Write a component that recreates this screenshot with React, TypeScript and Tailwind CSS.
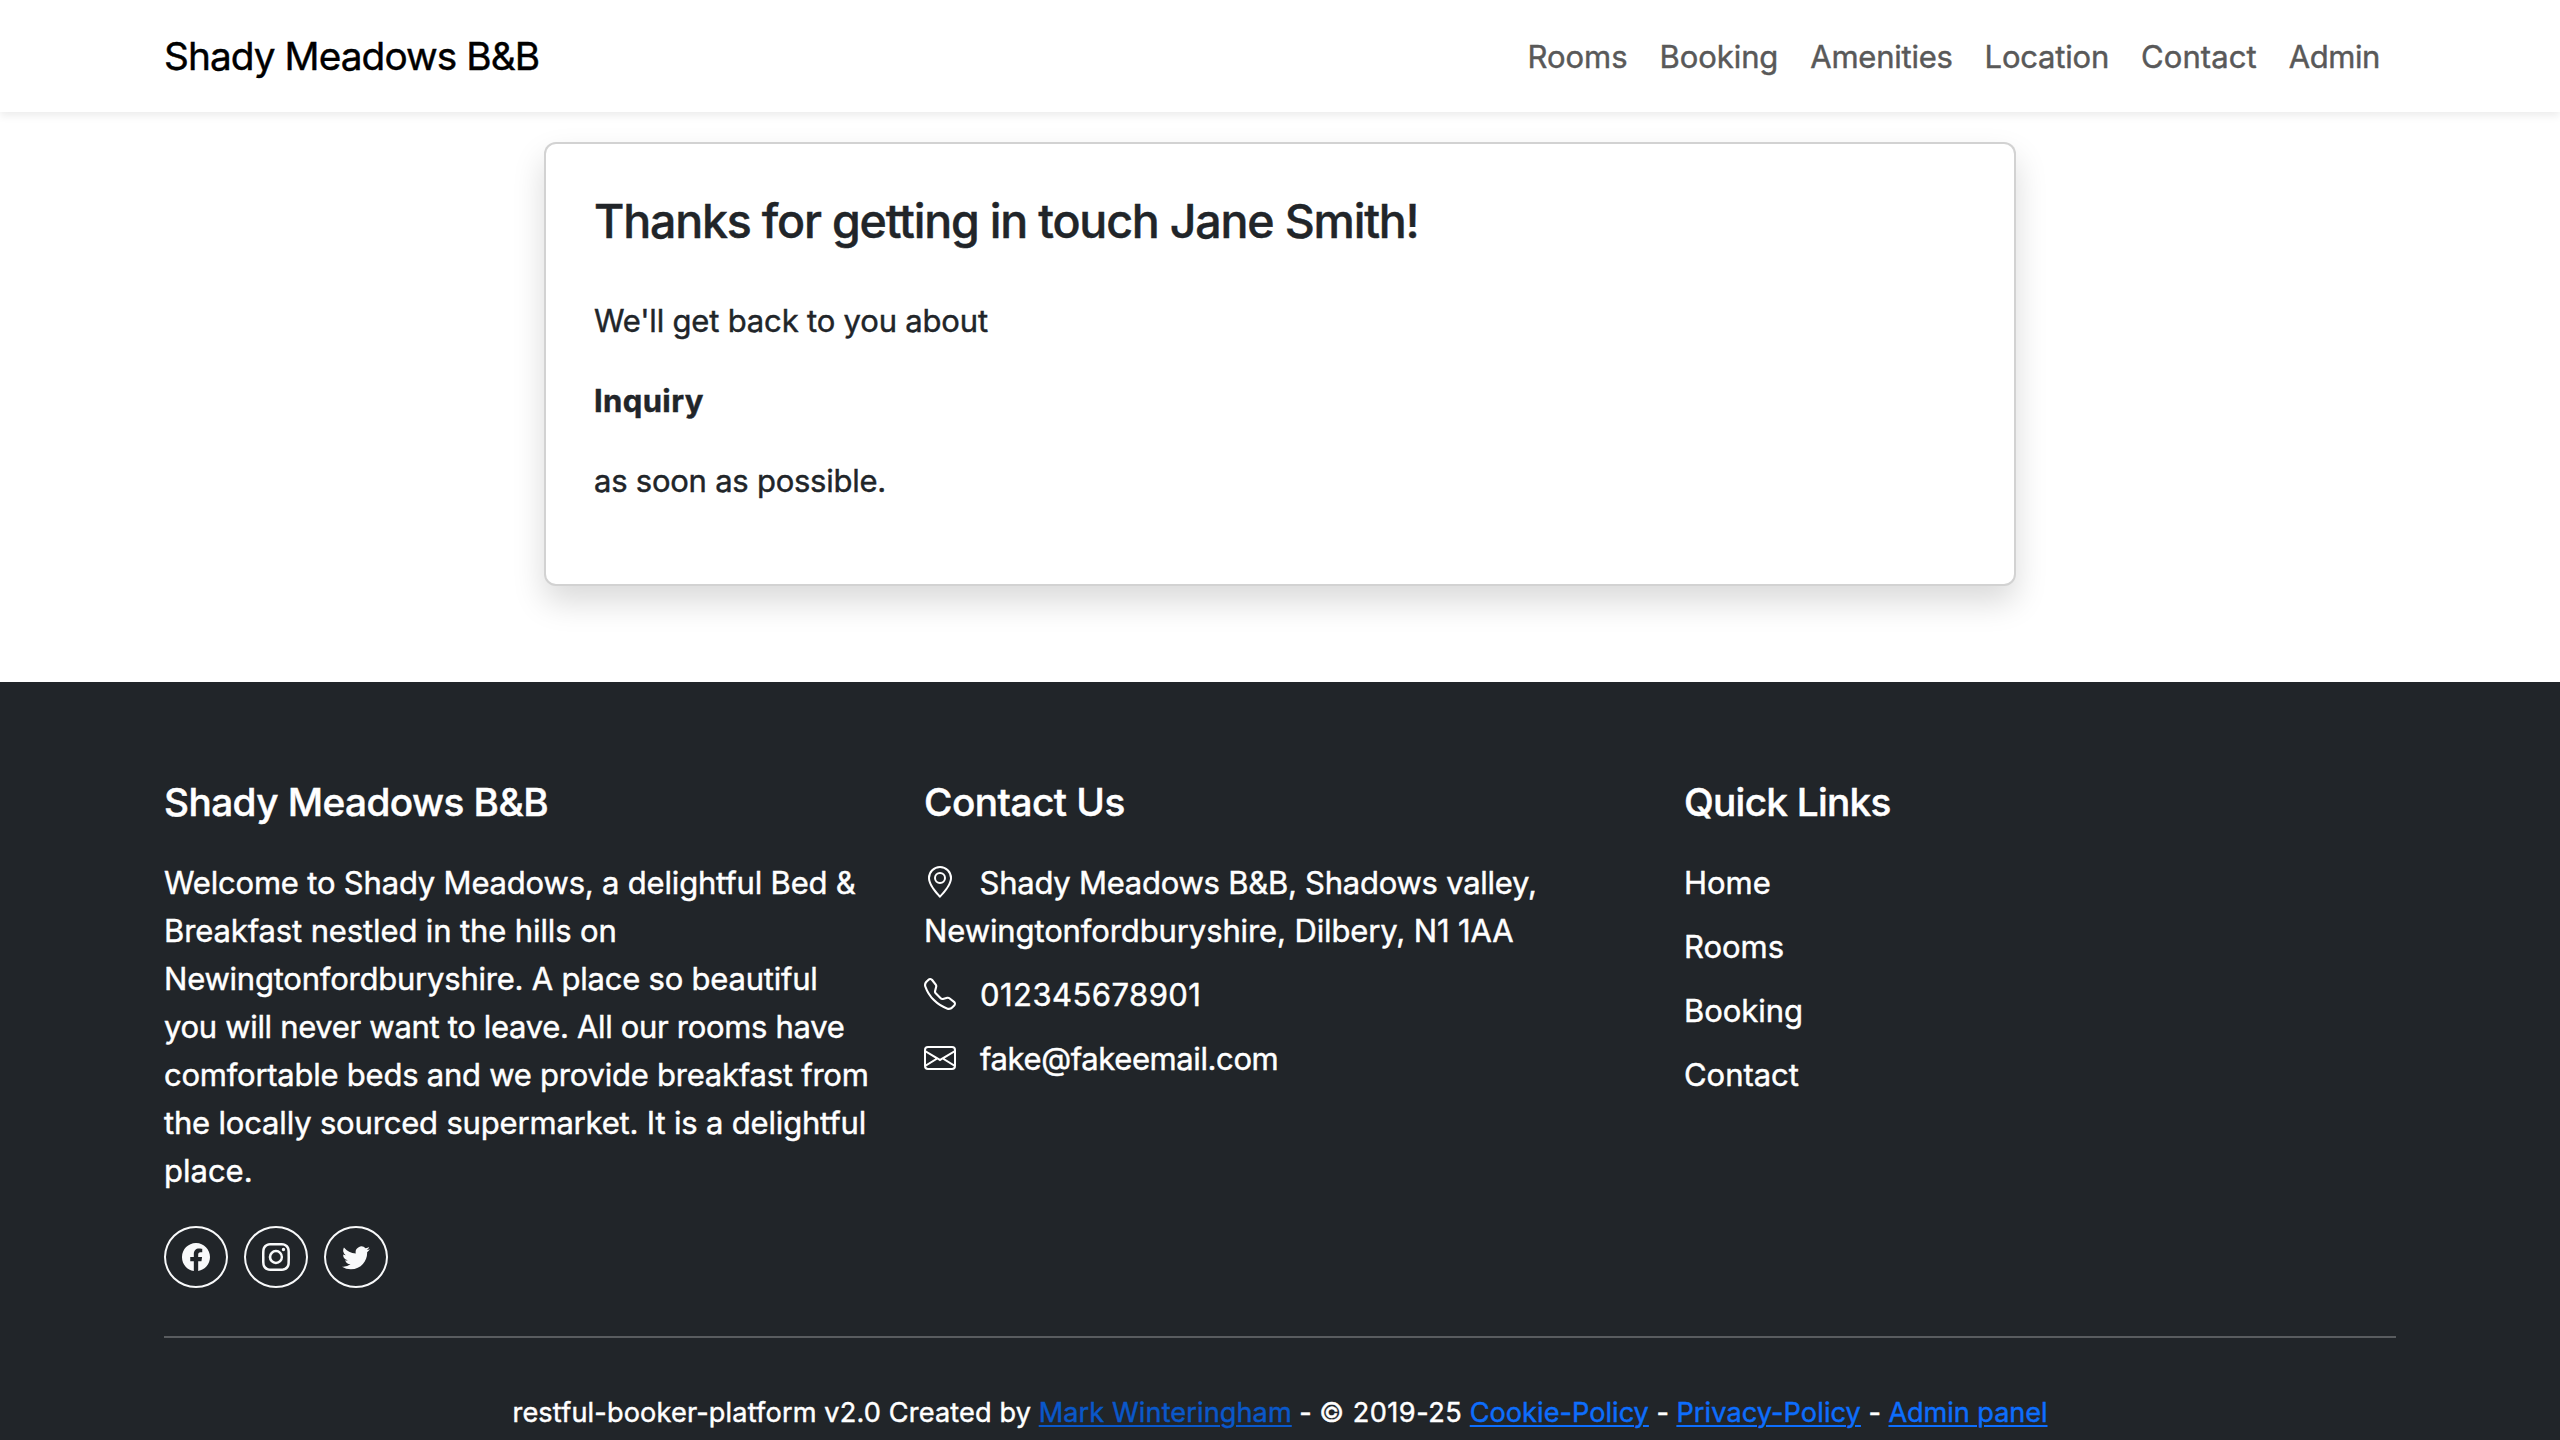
import {
  BsEnvelope,
  BsFacebook,
  BsGeoAlt,
  BsInstagram,
  BsTelephone,
  BsTwitter,
} from "react-icons/bs";

const navLinks = [
  { label: "Rooms", tracking: "tracking-normal" },
  { label: "Booking", tracking: "tracking-[-0.09px]" },
  { label: "Amenities", tracking: "tracking-[-0.25px]" },
  { label: "Location", tracking: "tracking-[-0.2px]" },
  { label: "Contact", tracking: "tracking-[0.08px]" },
  { label: "Admin", tracking: "tracking-[-0.42px]" },
];

const aboutLines = [
  { text: "Welcome to Shady Meadows, a delightful Bed &", tracking: "tracking-[-0.19px]" },
  { text: "Breakfast nestled in the hills on", tracking: "tracking-[-0.12px]" },
  { text: "Newingtonfordburyshire. A place so beautiful", tracking: "tracking-[-0.22px]" },
  { text: "you will never want to leave. All our rooms have", tracking: "tracking-[-0.32px]" },
  { text: "comfortable beds and we provide breakfast from", tracking: "tracking-[-0.24px]" },
  { text: "the locally sourced supermarket. It is a delightful", tracking: "tracking-[-0.18px]" },
  { text: "place.", tracking: "tracking-normal" },
];

const quickLinks = ["Home", "Rooms", "Booking", "Contact"];

const socials = [
  { name: "Facebook", Icon: BsFacebook },
  { name: "Instagram", Icon: BsInstagram },
  { name: "Twitter", Icon: BsTwitter },
];

function Navbar() {
  return (
    <nav className="relative flex h-28 items-center justify-between bg-white px-[164px] shadow-[0_4px_8px_rgba(0,0,0,0.075)]">
      <a className="text-[38.75px] leading-[60px] tracking-[-0.92px] text-black">Shady Meadows B&amp;B</a>
      <ul className="flex pt-0.5 text-[31px] leading-[48px] text-[#595959]">
        {navLinks.map((link) => (
          <li key={link.label} className={`px-4 ${link.tracking}`}>
            {link.label}
          </li>
        ))}
      </ul>
    </nav>
  );
}

function ThanksCard() {
  return (
    <section className="mx-auto mt-[30px] h-[444px] w-[1472px] rounded-xl border-2 border-black/[0.175] bg-white p-12 text-[31px] leading-[48px] shadow-[0_16px_32px_rgba(0,0,0,0.15)]">
      <h3 className="text-[46.5px] leading-[58px] font-medium tracking-[-1.19px]">
        Thanks for getting in touch Jane Smith!
      </h3>
      <p className="mt-[47px] tracking-[-0.18px]">We'll get back to you about</p>
      <p className="mt-8 font-bold tracking-[0.38px]">Inquiry</p>
      <p className="mt-8 tracking-[-0.24px]">as soon as possible.</p>
    </section>
  );
}

function Footer() {
  return (
    <footer className="mt-24 h-[758px] overflow-hidden bg-[#212529] px-[164px] pt-24 text-white">
      <div className="grid grid-cols-[760px_760px_1fr] text-[31px] leading-[48px]">
        <div>
          <h5 className="text-[38.75px] leading-[48px] font-medium tracking-[-0.58px]">Shady Meadows B&amp;B</h5>
          <p className="mt-[33px]">
            {aboutLines.map((line) => (
              <span key={line.text} className={`block whitespace-nowrap ${line.tracking}`}>
                {line.text}
              </span>
            ))}
          </p>
          <div className="mt-[31px] flex gap-4">
            {socials.map(({ name, Icon }) => (
              <a
                key={name}
                aria-label={name}
                className="flex h-[62px] w-16 items-center justify-center rounded-[50%] border-2 border-[#f8f9fa] text-[#f8f9fa]"
              >
                <Icon className="size-7" />
              </a>
            ))}
          </div>
        </div>
        <div>
          <h5 className="text-[38.75px] leading-[48px] font-medium tracking-[-0.52px]">Contact Us</h5>
          <ul className="mt-[33px] flex flex-col gap-4">
            <li>
              <div className="flex tracking-[-0.25px]">
                <BsGeoAlt className="mt-[7px] mr-[23.5px] size-8 [-webkit-text-stroke:0]" />
                Shady Meadows B&amp;B, Shadows valley,
              </div>
              <div className="tracking-[-0.11px]">Newingtonfordburyshire, Dilbery, N1 1AA</div>
            </li>
            <li className="flex tracking-[0.45px]">
              <BsTelephone className="mt-[7px] mr-6 size-8" />
              012345678901
            </li>
            <li className="flex tracking-[-0.4px]">
              <BsEnvelope className="mt-[7px] mr-6 size-8" />
              fake@fakeemail.com
            </li>
          </ul>
        </div>
        <div>
          <h5 className="text-[38.75px] leading-[48px] font-medium tracking-[-0.74px]">Quick Links</h5>
          <ul className="mt-[33px] flex flex-col gap-4 tracking-[-0.05px]">
            {quickLinks.map((label) => (
              <li key={label}>{label}</li>
            ))}
          </ul>
        </div>
      </div>
      <hr className="mt-12 border-t-2 border-[#595c5f]" />
      <div className="mt-[54px] flex justify-center gap-[7.5px] text-[27.125px] leading-[42px] whitespace-nowrap [text-decoration-skip-ink:auto]">
        <span className="tracking-[0.16px]">restful-booker-platform v2.0 Created by</span>
        <a className="tracking-[0.1px] text-[#0a58ca] underline decoration-2 underline-offset-3">Mark Winteringham</a>
        <span>-</span>
        <span className="tracking-[0.5px]">© 2019-25</span>
        <a className="tracking-[0.03px] text-[#0d6efd] underline decoration-2 underline-offset-3">Cookie-Policy</a>
        <span>-</span>
        <a className="tracking-[0.1px] text-[#0d6efd] underline decoration-2 underline-offset-3">Privacy-Policy</a>
        <span>-</span>
        <a className="tracking-[-0.06px] text-[#0d6efd] underline decoration-2 underline-offset-3">Admin panel</a>
      </div>
    </footer>
  );
}

export default function App() {
  return (
    <div className="h-[1440px] overflow-hidden bg-white font-[Inter,sans-serif] text-[#212529] [-webkit-text-stroke:0.45px]">
      <Navbar />
      <ThanksCard />
      <Footer />
    </div>
  );
}
